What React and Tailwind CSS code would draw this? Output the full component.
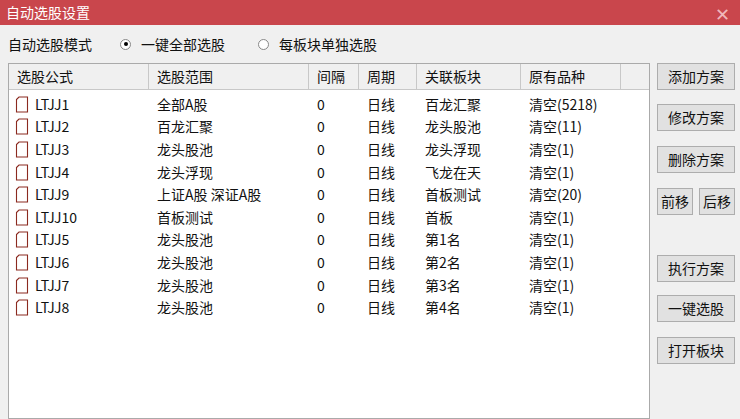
const rows = [
  ['LTJJ1', '全部A股', '0', '日线', '百龙汇聚', '清空(5218)'],
  ['LTJJ2', '百龙汇聚', '0', '日线', '龙头股池', '清空(11)'],
  ['LTJJ3', '龙头股池', '0', '日线', '龙头浮现', '清空(1)'],
  ['LTJJ4', '龙头浮现', '0', '日线', '飞龙在天', '清空(1)'],
  ['LTJJ9', '上证A股 深证A股', '0', '日线', '首板测试', '清空(20)'],
  ['LTJJ10', '首板测试', '0', '日线', '首板', '清空(1)'],
  ['LTJJ5', '龙头股池', '0', '日线', '第1名', '清空(1)'],
  ['LTJJ6', '龙头股池', '0', '日线', '第2名', '清空(1)'],
  ['LTJJ7', '龙头股池', '0', '日线', '第3名', '清空(1)'],
  ['LTJJ8', '龙头股池', '0', '日线', '第4名', '清空(1)'],
];
const widths = ['w-[140px]', 'w-[160px]', 'w-[50px]', 'w-[58px]', 'w-[104px]', 'w-[100px]'];
const heads = ['选股公式', '选股范围', '间隔', '周期', '关联板块', '原有品种'];

function Btn({ children, className = 'w-[78px]' }) {
  return (
    <button className={`${className} h-[27px] border border-[#adadad] bg-[#e1e1e1] text-[14px] text-[#111]`}>
      {children}
    </button>
  );
}

function DocIcon() {
  return (
    <svg width="14" height="17" viewBox="0 0 14 17" className="mr-[6px] shrink-0">
      <path d="M1.5 3.5 L4 1 H12.5 V16 H1.5 Z" fill="#fff" stroke="#8b2a20" strokeWidth="1.1" />
    </svg>
  );
}

export default function App() {
  return (
    <div className="w-[740px] h-[419px] overflow-hidden bg-[#f0f0f0] flex flex-col" style={{ fontFamily: '"Microsoft YaHei","Noto Sans CJK SC",sans-serif' }}>
      <div className="h-[25px] bg-[#c9464c] flex items-center justify-between pl-[6px] pr-[10px] text-white text-[14px]">
        <span>自动选股设置</span>
        <span className="text-[18px] text-[#f0b8bb] leading-none font-light">✕</span>
      </div>
      <div className="flex items-center h-[38px] pl-[8px] text-[14px] text-[#111]">
        <span>自动选股模式</span>
        <span className="ml-[28px] w-[11px] h-[11px] rounded-full border border-[#888] bg-white flex items-center justify-center">
          <span className="w-[4px] h-[4px] rounded-full bg-black" />
        </span>
        <span className="ml-[10px]">一键全部选股</span>
        <span className="ml-[33px] w-[11px] h-[11px] rounded-full border border-[#888] bg-white" />
        <span className="ml-[10px]">每板块单独选股</span>
      </div>
      <div className="flex flex-1">
        <div className="ml-[8px] w-[642px] border border-[#aaa] bg-white">
          <div className="flex h-[26px] text-[14px] text-[#111]">
            {heads.map((h, i) => (
              <div key={i} className={`${widths[i]} border-r border-b border-[#c8c8c8] bg-[#f0f0f0] pl-[8px] flex items-center`}>{h}</div>
            ))}
            <div className="flex-1 border-b border-[#c8c8c8] bg-[#f0f0f0]" />
          </div>
          <div className="pt-[3px]">
            {rows.map((r, ri) => (
              <div key={ri} className="flex h-[22.6px] items-center text-[14px] text-[#111]">
                {r.map((c, ci) => (
                  <div key={ci} className={`${widths[ci]} ${ci === 0 ? 'pl-[6px] flex items-center' : 'pl-[8px]'} whitespace-nowrap`}>
                    {ci === 0 && <DocIcon />}
                    {c}
                  </div>
                ))}
              </div>
            ))}
          </div>
        </div>
        <div className="ml-[7px] w-[78px] flex flex-col">
          <Btn>添加方案</Btn>
          <div className="h-[14px]" />
          <Btn>修改方案</Btn>
          <div className="h-[15px]" />
          <Btn>删除方案</Btn>
          <div className="h-[15px]" />
          <div className="flex justify-between">
            <Btn className="w-[36px]">前移</Btn>
            <Btn className="w-[36px]">后移</Btn>
          </div>
          <div className="h-[40px]" />
          <Btn>执行方案</Btn>
          <div className="h-[13px]" />
          <Btn>一键选股</Btn>
          <div className="h-[15px]" />
          <Btn>打开板块</Btn>
        </div>
      </div>
    </div>
  );
}
